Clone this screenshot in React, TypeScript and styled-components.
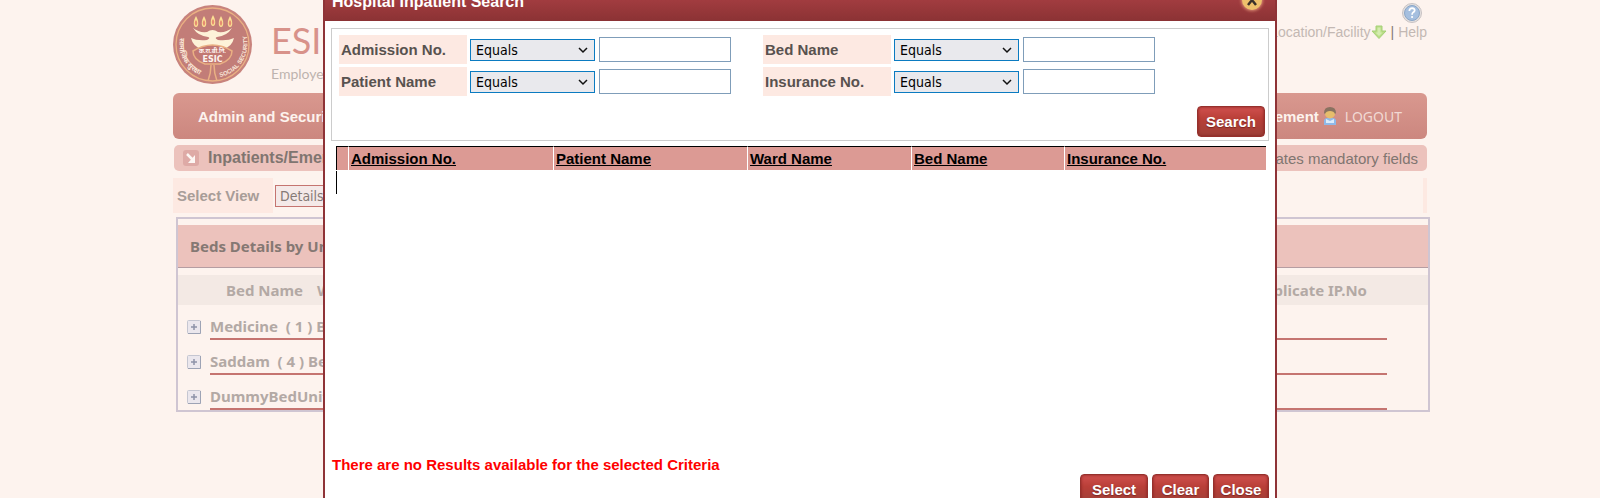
import React from "react";
import styled, { createGlobalStyle } from "styled-components";

const sans = `"Liberation Sans", Arial, sans-serif`;
const humanist = `"Noto Sans", Tahoma, sans-serif`;
const control = `"DejaVu Sans Condensed", Tahoma, sans-serif`;

const GlobalStyle = createGlobalStyle`
  * { box-sizing: border-box; }
  body { margin: 0; background: #fdf3ee; font-family: ${sans}; font-size: 15px; color: #807570; overflow: hidden; }
  button, input, select { font-family: inherit; margin: 0; }
`;

const Page = styled.div`
  max-width: 1254px;
  margin: 0 auto;
`;

const Header = styled.header`
  display: flex;
  justify-content: space-between;
  height: 93px;
`;

const Brand = styled.div`
  display: flex;
  gap: 18px;
  padding-top: 4px;
`;

const BrandText = styled.div`
  font-family: Lato, sans-serif;
  padding-top: 12px;
`;

const BrandName = styled.div`
  font-size: 36px;
  line-height: 48px;
  color: #d8928a;
`;

const Tagline = styled.div`
  font-size: 14px;
  line-height: 20px;
  color: #bdb3af;
`;

const Utility = styled.div`
  display: flex;
  flex-direction: column;
  align-items: flex-end;
  padding-top: 3px;
  color: #857a76;
`;

const HelpIcon = styled.svg`
  margin-right: 5px;
`;

const UtilityLinks = styled.div`
  display: flex;
  align-items: center;
  line-height: 18px;
  font-size: 14px;
`;

const UtilityLink = styled.a`
  color: #c3b8b3;
  text-decoration: none;
`;

const Divider = styled.span`
  margin: 0 4px;
`;

const Nav = styled.nav`
  display: flex;
  align-items: center;
  justify-content: space-between;
  height: 46px;
  padding: 0 25px;
  border-radius: 6px;
  background: linear-gradient(#d9988f, #cc877f);
`;

const NavLink = styled.a`
  color: #fdf3ee;
  font-weight: bold;
  text-decoration: none;
`;

const NavEnd = styled.div`
  display: flex;
  align-items: center;
  gap: 4px;
`;

const Logout = styled.button`
  margin-left: 4px;
  padding: 0;
  border: 0;
  background: none;
  color: #f1d9d3;
  font: 14px ${humanist};
`;

const TitleBar = styled.div`
  display: flex;
  align-items: center;
  height: 26px;
  margin: 6px 0 7px 1px;
  padding: 0 9px;
  border-radius: 5px;
  background: #ecc2bc;
`;

const PageTitle = styled.h1`
  flex: 1;
  margin: 0 0 0 9px;
  font-size: 16px;
`;

const ViewRow = styled.div`
  display: flex;
  align-items: center;
  gap: 2px;
  height: 35px;
  border-right: 4px solid #fde9e2;
`;

const ViewLabel = styled.label`
  width: 100px;
  padding-left: 4px;
  background: #fde9e2;
  color: #a89d98;
  font-weight: bold;
  line-height: 35px;
`;

const ViewSelect = styled.select`
  width: 160px;
  height: 22px;
  padding: 0;
  border: 1px solid #c57470;
  border-radius: 0;
  background: #f4e9e8;
  color: #857a76;
  font-family: ${control};
  font-size: 14px;
`;

const Panel = styled.section`
  margin: 4px -3px 0 3px;
  border: 2px solid #cfc5d2;
  font-family: ${humanist};
  font-weight: bold;
  color: #b3a9a5;
`;

const PanelTitle = styled.h2`
  margin: 6px 0 7px;
  padding-left: 12px;
  border-bottom: 1px solid #b59da2;
  background: #ecc2bc;
  color: #857873;
  font-size: 15px;
  line-height: 42px;
`;

const PanelColumns = styled.div`
  display: flex;
  gap: 14px;
  padding: 0 61px 0 48px;
  background: #f3e9e4;
  line-height: 30px;
`;

const ColumnName = styled.span<{ $end?: boolean }>`
  margin-left: ${(p) => (p.$end ? "auto" : "0")};
`;

const Unit = styled.div`
  display: flex;
  align-items: flex-end;
  gap: 9px;
  height: 35px;
  padding: 0 41px 0 9px;
`;

const UnitName = styled.div`
  flex: 1;
  border-bottom: 2px solid #c57470;
  line-height: 24px;
  white-space: pre;
`;

const Toggle = styled.button`
  padding: 0 0 6px;
  border: 0;
  background: none;
  line-height: 0;
`;

const Dialog = styled.div`
  position: fixed;
  top: -12px;
  left: 0;
  right: 0;
  width: 100%;
  max-width: 954px;
  margin: 0 auto;
  border: 2px solid #8f3337;
  background: #fff;
`;

const DialogHeader = styled.div`
  display: flex;
  align-items: flex-start;
  justify-content: space-between;
  height: 31px;
  padding: 0 13px 0 7px;
  background: linear-gradient(#ac4145, #8b3234);
  color: #fff;
`;

const DialogTitle = styled.h2`
  margin: 0;
  padding-top: 2px;
  font-size: 16px;
  line-height: 20px;
`;

const CloseIcon = styled.button`
  width: 20px;
  height: 20px;
  padding: 0;
  border: 0;
  border-radius: 10px;
  background: #eec06c;
  box-shadow: 0 0 3px 1px #d98a72;
  line-height: 0;
`;

const DialogBody = styled.div`
  padding: 7px 6px;
`;

const Criteria = styled.form`
  padding: 6px 3px 3px 7px;
  border: 1px solid #ccc;
`;

const Fields = styled.div`
  display: grid;
  grid-template-columns: auto auto;
  justify-content: start;
  gap: 3px 33px;
`;

const Field = styled.div`
  display: grid;
  grid-template-columns: 128px 125px 132px;
  column-gap: 3px;
  align-items: center;
  height: 29px;
`;

const FieldLabel = styled.label`
  padding-left: 2px;
  background: #fde9e2;
  color: #58524f;
  font-weight: bold;
  line-height: 29px;
`;

const SelectBox = styled.span`
  display: grid;
  align-items: center;
  padding-top: 1px;
  & > * { grid-area: 1 / 1; }
`;

const Select = styled.select`
  appearance: none;
  width: 100%;
  height: 22px;
  padding: 0 5px;
  border: 1px solid #0b7bc1;
  border-radius: 0;
  background: #e9e9ed;
  color: #000;
  font-family: ${control};
  font-size: 14px;
`;

const Chevron = styled.svg`
  justify-self: end;
  margin-right: 7px;
  pointer-events: none;
`;

const TextInput = styled.input`
  width: 100%;
  height: 25px;
  margin-left: 1px;
  border: 1px solid #7f9db9;
  background: #fff;
`;

const Actions = styled.div<{ $gap: number }>`
  display: flex;
  justify-content: flex-end;
  gap: 4px;
  margin-top: ${(p) => p.$gap}px;
`;

const Button = styled.button<{ $width: number }>`
  width: ${(p) => p.$width}px;
  height: 31px;
  padding: 0;
  border: 1px solid #96312d;
  border-radius: 4px;
  background: linear-gradient(#d0504e 0%, #b93f38 40%, #9c4038 100%);
  box-shadow: inset 0 0 3px #84211d;
  color: #fff;
  font-size: 15px;
  font-weight: bold;
  text-shadow: 0 1px 1px #7b2420;
`;

const Results = styled.table`
  width: calc(100% - 8px);
  margin: 5px 3px 0 5px;
  border-collapse: separate;
  border-spacing: 0;
  table-layout: fixed;
`;

const Column = styled.col<{ $width?: number }>`
  width: ${(p) => (p.$width ? `${p.$width}px` : "auto")};
`;

const HeadCell = styled.th`
  height: 24px;
  padding: 0 0 0 2px;
  border-top: 1px solid #000;
  border-left: 1px solid #fff;
  background: #dc9a94;
  text-align: left;
  &:first-child { border-left-color: #000; }
`;

const SortLink = styled.a`
  color: #000;
`;

const EmptyCell = styled.td`
  padding: 1px 0 0;
  &::before { content: ""; display: block; height: 23px; border-left: 1px solid #000; }
`;

const Message = styled.p`
  margin: 262px 0 0 1px;
  color: #f00;
  font-weight: bold;
  line-height: 18px;
`;

const Emblem = () => (
  <svg width="80" height="80" viewBox="0 0 80 80" role="img" aria-label="ESIC emblem">
    <defs>
      <path id="arcRight" d="M47 73 A34 34 0 0 0 73 30" />
      <path id="arcLeft" d="M7 34 A33 33 0 0 0 36 73" />
    </defs>
    <circle cx="39.500" cy="40.500" r="39.500" fill="#c8837d" />
    <circle cx="39.500" cy="40.500" r="36.500" fill="#c27d78" stroke="#eab083" strokeWidth="1.300" />
    {[23, 31, 40, 48, 57].map((x, i) => {
      const y = i === 2 ? 18 : 19;
      return (
        <g key={x}>
          <path d={`M${x} ${y - 7} C${x + 3} ${y - 2} ${x + 3} ${y + 4} ${x} ${y + 4} C${x - 3} ${y + 4} ${x - 3} ${y - 2} ${x} ${y - 7}Z`} fill="#fbdf94" />
          <path d={`M${x} ${y - 3} q2.500 3 0 6 q-2.500 -3 0 -6Z`} fill="#e58b70" />
        </g>
      );
    })}
    <path d="M20 24 Q26 29 34 28 Q39.500 24 45 28 Q53 29 59 24 Q54 32 44 33 Q41 34 45 36 Q55 37 61 34 Q59 43 50 45 L29 45 Q20 43 18 34 Q24 37 34 36 Q38 34 35 33 Q25 32 20 24Z" fill="#fdf2d8" />
    <path d="M20 47 Q39.500 35 59 47 Q59 56 47 60 L32 60 Q20 56 20 47Z" fill="#c27872" stroke="#eab083" strokeWidth="1.500" />
    <path d="M38 61 Q38 69 35 77 M41 61 Q41 69 44 77" fill="none" stroke="#eab083" strokeWidth="1.500" />
    <text x="39.500" y="49" textAnchor="middle" fontFamily="Noto Sans" fontWeight="bold" fontSize="6" fill="#fdf3ee">क.रा.बी.नि.</text>
    <text x="39.500" y="58" textAnchor="middle" fontFamily="DejaVu Sans" fontWeight="bold" fontSize="8" fill="#fdf3ee">ESIC</text>
    <text fontFamily="Liberation Sans" fontWeight="bold" fontSize="6" fill="#fbe8d8"><textPath href="#arcRight">SOCIAL SECURITY</textPath></text>
    <text fontFamily="Noto Sans" fontWeight="bold" fontSize="7" fill="#fbe8d8"><textPath href="#arcLeft">सामाजिक सुरक्षा</textPath></text>
  </svg>
);

const ExpandIcon = () => (
  <svg width="14" height="14" viewBox="0 0 14 14">
    <rect x="0.500" y="0.500" width="13" height="13" rx="1" fill="#ebe7ed" stroke="#c5c6d1" />
    <path d="M1 13.500h12.500V1" fill="none" stroke="#9da3b5" />
    <path d="M4 7h6M7 4v6" stroke="#8e93a8" strokeWidth="1.500" />
  </svg>
);

const units = ["Medicine  ( 1 ) Beds", "Saddam  ( 4 ) Beds", "DummyBedUnit  ( 2 ) Beds"];

const criteria = [
  { id: "admission", label: "Admission No." },
  { id: "bed", label: "Bed Name" },
  { id: "patient", label: "Patient Name" },
  { id: "insurance", label: "Insurance No." },
];

const columns = [
  { name: "", width: 12 },
  { name: "Admission No.", width: 205 },
  { name: "Patient Name", width: 194 },
  { name: "Ward Name", width: 164 },
  { name: "Bed Name", width: 153 },
  { name: "Insurance No.", width: undefined },
];

export default function App() {
  return (
    <>
      <GlobalStyle />
      <Page>
        <Header>
          <Brand>
            <Emblem />
            <BrandText>
              <BrandName>ESIC</BrandName>
              <Tagline>Employees' State</Tagline>
            </BrandText>
          </Brand>
          <Utility>
            <HelpIcon width="20" height="20" viewBox="0 0 20 20">
              <circle cx="10" cy="10" r="9.500" fill="#e4e0df" stroke="#c7c2c3" />
              <circle cx="10" cy="10" r="7.500" fill="#a5bfdf" stroke="#8ba6c7" />
              <path d="M7.300 8 Q7.500 5.200 10.200 5.200 Q12.800 5.400 12.700 7.500 Q12.500 8.800 11 9.500 Q10.100 10 10.100 11.800" fill="none" stroke="#fff" strokeWidth="1.700" />
              <circle cx="10.100" cy="14" r="1.100" fill="#fff" />
            </HelpIcon>
            <UtilityLinks>
              <UtilityLink href="#location">Location/Facility</UtilityLink>
              <svg width="16" height="14" viewBox="0 0 16 14">
                <path d="M5 1h6v5h4l-7 7.500L1 6h4Z" fill="#b9dd85" stroke="#a5d079" />
                <path d="M6.500 2.500h3v5h2L8 11 4.500 7.500h2Z" fill="#d4ecb0" />
              </svg>
              <Divider>|</Divider>
              <UtilityLink href="#help">Help</UtilityLink>
            </UtilityLinks>
          </Utility>
        </Header>
        <Nav>
          <NavLink href="#admin">Admin and Security</NavLink>
          <NavEnd>
            <NavLink href="#patients">Patient Management</NavLink>
            <svg width="14" height="20" viewBox="0 0 14 20">
              <path d="M1 19v-5q1-2 3-2h6q2 0 3 2v5Z" fill="#8fb9e8" />
              <path d="M3 13l4 2 4-2v4H3Z" fill="#dcecfa" />
              <ellipse cx="7" cy="7.500" rx="5" ry="5" fill="#e6bd6c" />
              <path d="M1 7Q1 1 7 1 13 1 13 7L12 8Q11 5 7 5 3 5 2 8Z" fill="#897260" />
            </svg>
            <Logout type="button">LOGOUT</Logout>
          </NavEnd>
        </Nav>
        <TitleBar>
          <svg width="16" height="16" viewBox="0 0 16 16">
            <rect width="16" height="16" rx="3" fill="#deaaa6" />
            <path d="M4 4l6 6" fill="none" stroke="#fdf6f3" strokeWidth="2.500" />
            <path d="M12 5v8H5Z" fill="#fdf6f3" />
          </svg>
          <PageTitle>Inpatients/Emergency</PageTitle>
          <span>* Indicates mandatory fields</span>
        </TitleBar>
        <ViewRow>
          <ViewLabel htmlFor="view">Select View</ViewLabel>
          <ViewSelect id="view"><option>Details</option></ViewSelect>
        </ViewRow>
        <Panel>
          <PanelTitle>Beds Details by Unit</PanelTitle>
          <PanelColumns>
            <ColumnName>Bed Name</ColumnName>
            <ColumnName>Ward</ColumnName>
            <ColumnName $end>Duplicate IP.No</ColumnName>
          </PanelColumns>
          {units.map((unit) => (
            <Unit key={unit}>
              <Toggle type="button" aria-label="Expand"><ExpandIcon /></Toggle>
              <UnitName>{unit}</UnitName>
            </Unit>
          ))}
        </Panel>
      </Page>

      <Dialog role="dialog" aria-labelledby="dialog-title">
        <DialogHeader>
          <DialogTitle id="dialog-title">Hospital Inpatient Search</DialogTitle>
          <CloseIcon type="button" aria-label="Close dialog">
            <svg width="12" height="12" viewBox="0 0 12 12">
              <path d="M2 1l8 10M10 1L2 11" stroke="#3a302a" strokeWidth="2.500" />
            </svg>
          </CloseIcon>
        </DialogHeader>
        <DialogBody>
          <Criteria>
            <Fields>
              {criteria.map(({ id, label }) => (
                <Field key={id}>
                  <FieldLabel htmlFor={id}>{label}</FieldLabel>
                  <SelectBox>
                    <Select aria-label={`${label} condition`}><option>Equals</option></Select>
                    <Chevron width="10" height="7" viewBox="0 0 10 7">
                      <path d="M1 1l4 4 4-4" fill="none" stroke="#111" strokeWidth="1.500" />
                    </Chevron>
                  </SelectBox>
                  <TextInput id={id} type="text" />
                </Field>
              ))}
            </Fields>
            <Actions $gap={10}>
              <Button type="button" $width={68}>Search</Button>
            </Actions>
          </Criteria>
          <Results>
            <colgroup>
              {columns.map((c) => <Column key={c.name} $width={c.width} />)}
            </colgroup>
            <thead>
              <tr>
                {columns.map((c) => (
                  <HeadCell key={c.name}>{c.name && <SortLink href="#sort">{c.name}</SortLink>}</HeadCell>
                ))}
              </tr>
            </thead>
            <tbody>
              <tr><EmptyCell colSpan={6} /></tr>
            </tbody>
          </Results>
          <Message>There are no Results available for the selected Criteria</Message>
          <Actions as="footer" $gap={0}>
            <Button type="button" $width={68}>Select</Button>
            <Button type="button" $width={57}>Clear</Button>
            <Button type="button" $width={56}>Close</Button>
          </Actions>
        </DialogBody>
      </Dialog>
    </>
  );
}
